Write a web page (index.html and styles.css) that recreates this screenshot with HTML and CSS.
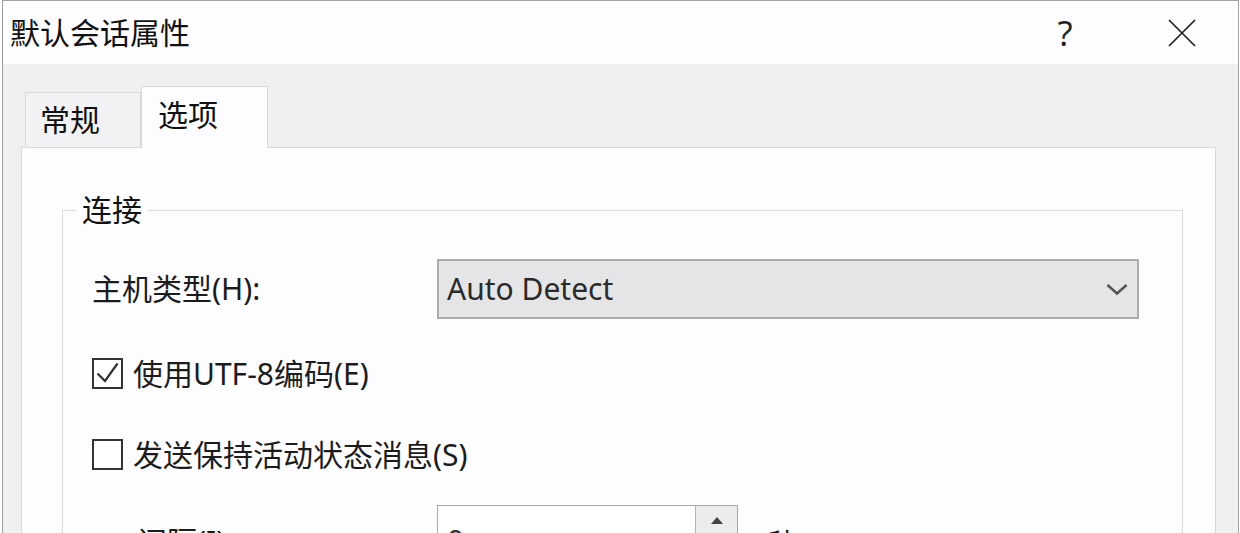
FILE: index.html
```html
<!DOCTYPE html>
<html lang="zh-CN">
<head>
<meta charset="utf-8">
<title>默认会话属性</title>
<link rel="stylesheet" href="styles.css">
</head>
<body>
<div class="window">
  <div class="titlebar">
    <div class="title">默认会话属性</div>
    <div class="controls">
      <div class="ctl help">?</div>
      <div class="ctl close">
        <svg width="28" height="28" viewBox="0 0 28 28"><path d="M1 1L27 27M27 1L1 27" stroke="#222" stroke-width="1.7" fill="none"/></svg>
      </div>
    </div>
  </div>
  <div class="body">
    <div class="tabs">
      <div class="tab">常规</div>
      <div class="tab active">选项</div>
    </div>
    <div class="panel">
      <fieldset class="group">
        <legend>连接</legend>
        <div class="group-body">
          <div class="row host">
            <div class="label">主机类型(H):</div>
            <div class="combo">
              <span class="combo-text">Auto Detect</span>
              <svg class="chev" width="22" height="13" viewBox="0 0 22 13"><polyline points="1.5,2 11,10.5 20.5,2" stroke="#555" stroke-width="2.6" fill="none"/></svg>
            </div>
          </div>
          <div class="row check first">
            <span class="box">
              <svg width="27" height="27" viewBox="0 0 27 27"><polyline points="3.5,13.5 11,21 23.5,3.5" stroke="#333" stroke-width="2.2" fill="none"/></svg>
            </span>
            <span class="ctext">使用UTF-8编码(E)</span>
          </div>
          <div class="row check second">
            <span class="box"></span>
            <span class="ctext">发送保持活动状态消息(S)</span>
          </div>
          <div class="row interval">
            <div class="label sub">间隔(I):</div>
            <div class="spin">
              <div class="spin-value">0</div>
              <div class="spin-btns">
                <div class="spin-btn"><svg width="12" height="8" viewBox="0 0 12 8"><polygon points="0,8 6,1 12,8" fill="#444"/></svg></div>
                <div class="spin-btn"><svg width="12" height="8" viewBox="0 0 12 8"><polygon points="0,0 6,7 12,0" fill="#444"/></svg></div>
              </div>
            </div>
            <div class="unit">秒</div>
          </div>
        </div>
      </fieldset>
    </div>
  </div>
</div>
</body>
</html>
```
FILE: styles.css
```css
html, body {
  margin: 0;
  padding: 0;
}
body {
  width: 1240px;
  height: 533px;
  overflow: hidden;
  background: #ffffff;
  font-family: "Noto Sans", "Noto Sans CJK SC", sans-serif;
  font-size: 30px;
  color: #1c1c1c;
}
.window {
  margin-left: 2px;
  width: 1235px;
  height: 532px;
  border-top: 1px solid #a2a2a2;
  border-left: 1px solid #9c9c9c;
  border-right: 1px solid #a2a2a2;
  display: flex;
  flex-direction: column;
}
.titlebar {
  height: 63px;
  flex: none;
  background: #fdfcff;
  display: flex;
  align-items: center;
}
.title {
  padding-left: 7px;
  line-height: 32px;
  font-size: 30px;
  color: #111;
}
.controls {
  margin-left: auto;
  display: flex;
  align-items: center;
  padding-right: 16px;
}
.ctl {
  width: 80px;
  height: 63px;
  display: flex;
  align-items: center;
  justify-content: center;
}
.help {
  font-family: "Open Sans", "Noto Sans", sans-serif;
  font-size: 35px;
  font-weight: 400;
  color: #222;
  margin-right: 37px;
}
.body {
  flex: 1;
  background: #f0eff2;
  padding: 22px 22px 0 18px;
  display: flex;
  flex-direction: column;
}
.tabs {
  display: flex;
  align-items: flex-end;
  padding-left: 4px;
  height: 61px;
  flex: none;
}
.tab {
  box-sizing: border-box;
  width: 116px;
  height: 55px;
  border: 1px solid #d9d9d9;
  border-bottom: none;
  background: #f2f1f4;
  padding-left: 14px;
  display: flex;
  align-items: center;
  line-height: 30px;
  color: #111;
}
.tab.active {
  width: 127px;
  height: 62px;
  margin-bottom: -1px;
  background: #fdfcff;
  padding-left: 16px;
  padding-bottom: 6px;
  position: relative;
  z-index: 1;
}
.panel {
  flex: 1;
  background: #fdfcff;
  border: 1px solid #d9d9d9;
  border-bottom: none;
  padding: 47px 32px 0 40px;
}
.group {
  margin: 0;
  padding: 0;
  border: 1px solid #dcdcdc;
  min-width: 0;
  height: 600px;
}
.group legend {
  margin-left: 13px;
  padding: 0 6px;
  line-height: 30px;
  color: #111;
}
.group-body {
  padding: 0 43px 0 29px;
  display: flex;
  flex-direction: column;
}
.row {
  display: flex;
  align-items: center;
}
.row.host {
  margin-top: 34px;
  height: 60px;
}
.label {
  width: 345px;
  flex: none;
  line-height: 30px;
}
.combo {
  flex: 1;
  height: 60px;
  box-sizing: border-box;
  border: 2px solid #acacac;
  background: #e5e5e7;
  display: flex;
  align-items: center;
  padding: 0 9px 0 8px;
}
.combo-text {
  color: #2a2a2a;
  line-height: 30px;
}
.chev {
  margin-left: auto;
}
.row.check {
  height: 31px;
}
.row.check.first {
  margin-top: 39px;
}
.row.check.second {
  margin-top: 50px;
}
.box {
  width: 31px;
  height: 31px;
  box-sizing: border-box;
  border: 2px solid #333;
  background: #fff;
  flex: none;
  display: flex;
  align-items: center;
  justify-content: center;
}
.ctext {
  margin-left: 10px;
  line-height: 30px;
}
.row.interval {
  margin-top: 35px;
  height: 60px;
  align-items: flex-start;
}
.label.sub {
  width: 300px;
  margin-left: 45px;
  padding-top: 22px;
}
.spin {
  width: 301px;
  height: 60px;
  box-sizing: border-box;
  border: 1px solid #a8a8a8;
  background: #fff;
  display: flex;
}
.spin-value {
  flex: 1;
  padding-left: 9px;
  padding-top: 6px;
  line-height: 58px;
  color: #333;
}
.spin-btns {
  width: 41px;
  display: flex;
  flex-direction: column;
  border-left: 1px solid #b4b4b4;
}
.spin-btn {
  flex: 1;
  background: #ececee;
  display: flex;
  align-items: center;
  justify-content: center;
}
.spin-btn + .spin-btn {
  border-top: 1px solid #c8c8c8;
}
.unit {
  margin-left: 29px;
  padding-top: 24px;
  line-height: 30px;
}
```
